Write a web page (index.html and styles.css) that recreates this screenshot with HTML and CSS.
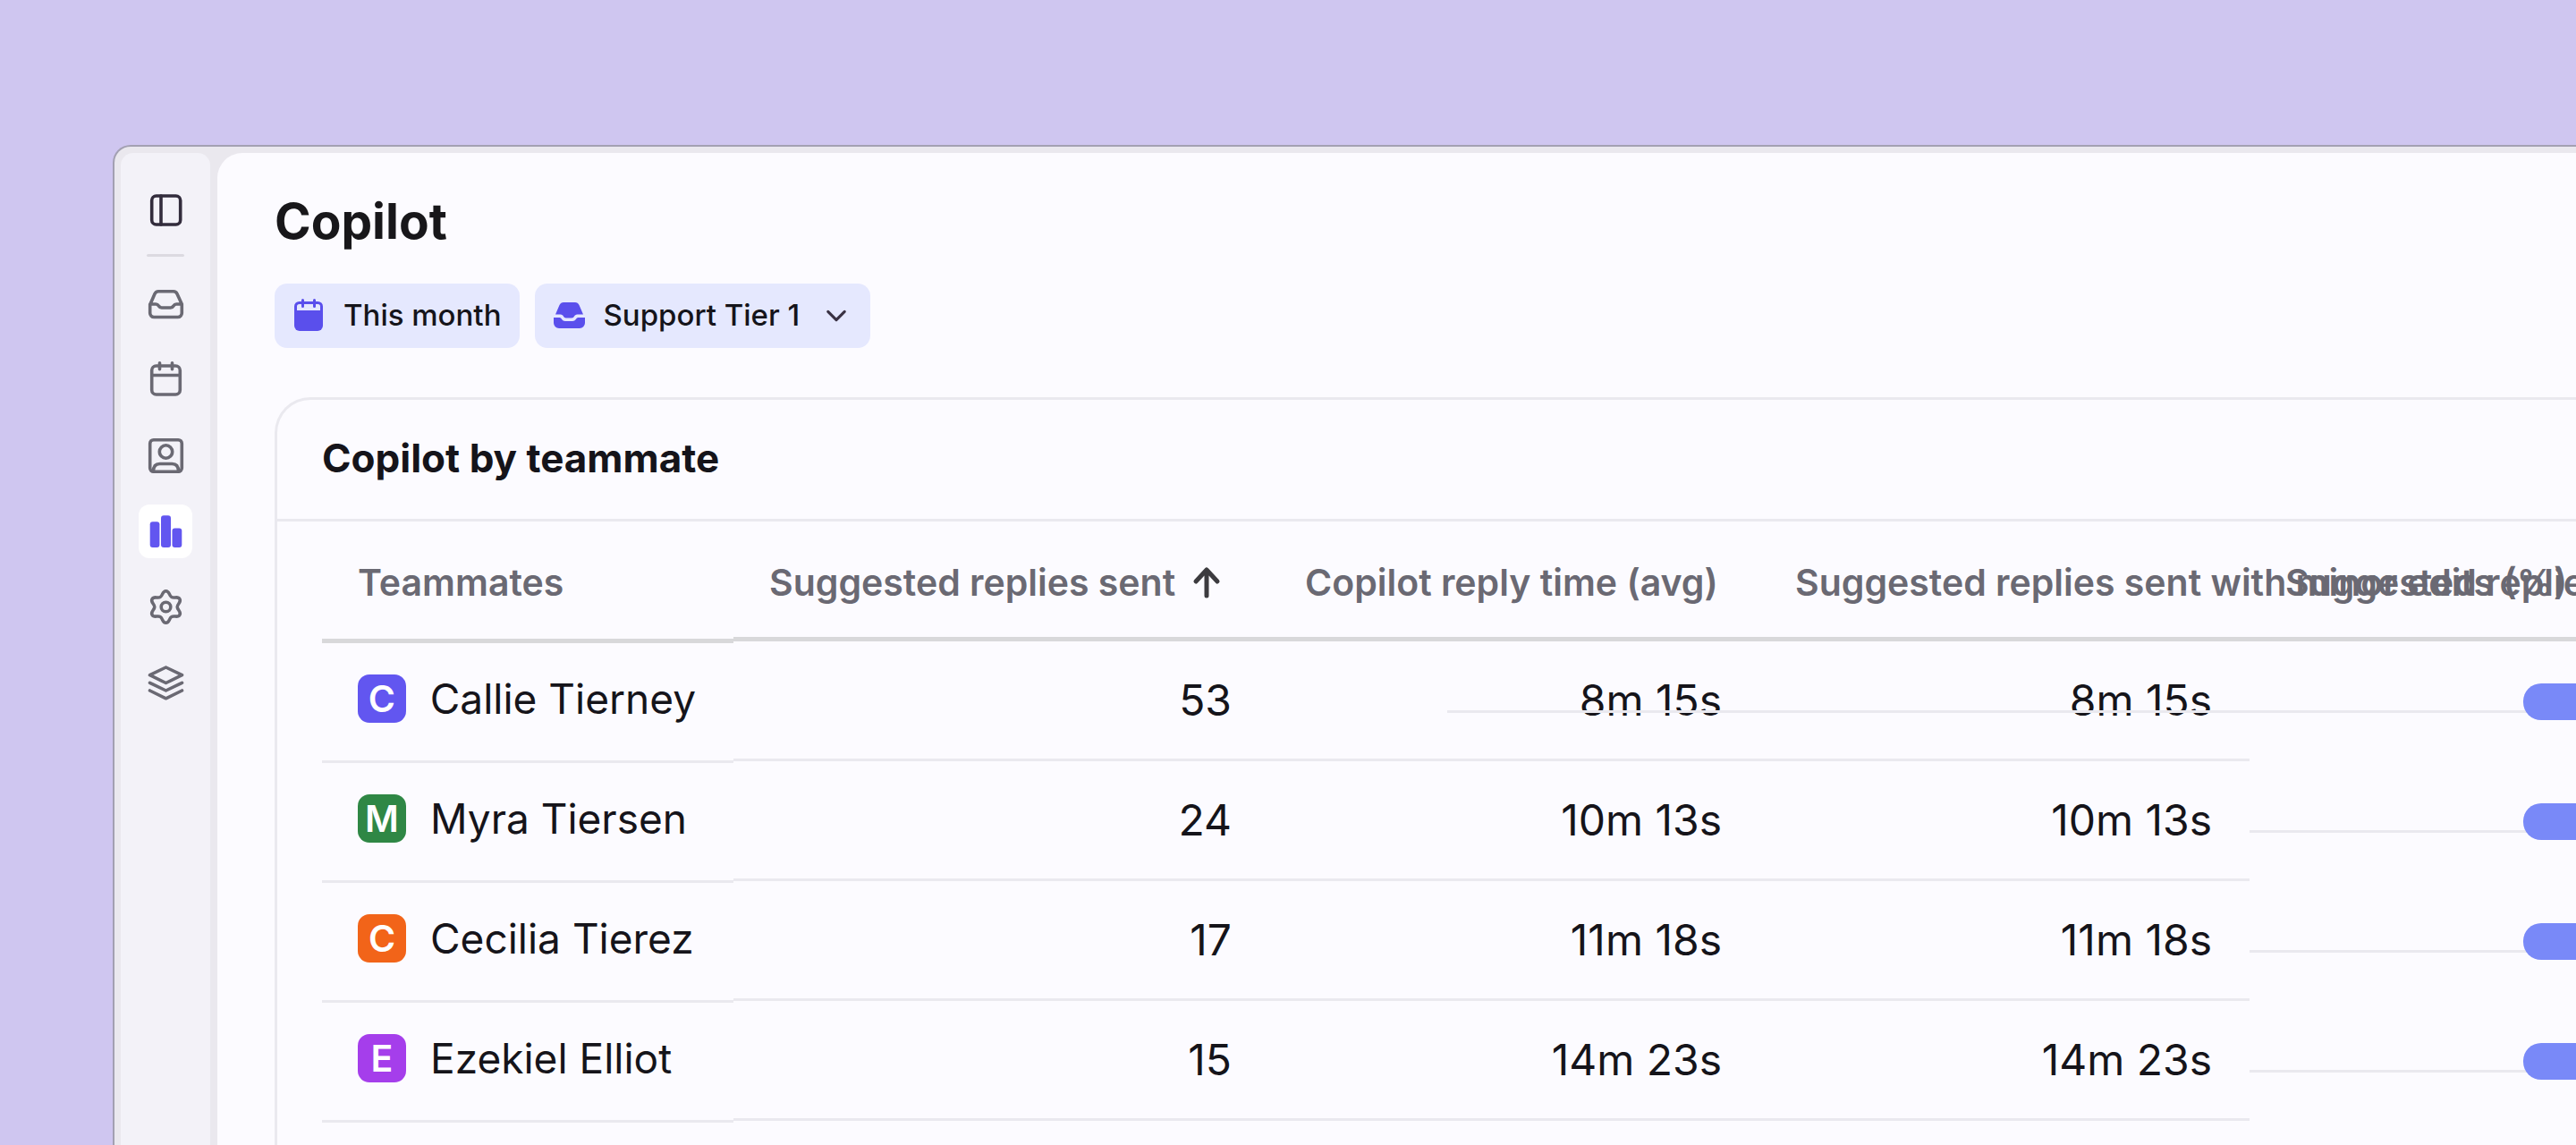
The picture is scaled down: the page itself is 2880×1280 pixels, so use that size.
FILE: index.html
```html
<!DOCTYPE html>
<html lang="en">
<head>
  <meta charset="UTF-8">
  <meta name="viewport" content="width=device-width, initial-scale=1.0">
  <title>Copilot</title>
  <link rel="stylesheet" href="styles.css">
</head>
<body>

  <div class="window">
    <nav class="sidebar">
      <button class="nav-item dark" type="button" aria-label="Toggle sidebar">
        <svg viewBox="0 0 60 60"><rect x="14.700" y="14" width="32" height="32" rx="5"/><path d="M25 14v32"/></svg>
      </button>
      <hr>
      <div class="nav-links">
        <a class="nav-item" href="#inbox" aria-label="Inbox">
          <svg viewBox="-1 0 60 60"><path d="M12 31l5-11.500q1.200-2.700 4-2.700h17q2.800 0 4 2.700L47.300 31v10a4.500 4.500 0 0 1-4.500 4.500H16.200a4.500 4.500 0 0 1-4.500-4.500V31h6.500c4 0 2.500 4 6.500 4h10c4 0 2.500-4 6.500-4h6"/></svg>
        </a>
        <a class="nav-item" href="#calendar" aria-label="Calendar">
          <svg viewBox="-1 0 60 60"><rect x="13.700" y="15" width="31.600" height="32" rx="5"/><path d="M13.700 25.500h31.600M22.500 11.700v7M36.500 11.700v7"/></svg>
        </a>
        <a class="nav-item" href="#contacts" aria-label="Contacts">
          <svg viewBox="-1 0 60 60"><rect x="11.700" y="12.700" width="35.600" height="35.600" rx="4"/><circle cx="29.500" cy="26" r="7.200"/><path d="M15.500 48c0-5.500 2.500-8.500 7-8.500h14c4.500 0 7 3 7 8.500"/></svg>
        </a>
        <a class="nav-item active" href="#reports" aria-label="Reports">
          <svg viewBox="-1 0 60 60"><rect x="11.700" y="19.300" width="10.700" height="28.700" rx="3"/><rect x="24" y="12.300" width="11" height="35.700" rx="3"/><rect x="36.500" y="26.500" width="10.800" height="21.500" rx="3"/></svg>
        </a>
        <a class="nav-item" href="#settings" aria-label="Settings">
          <svg viewBox="-1 0 60 60"><path d="M29.500 11.700C33.700 11.700 32.800 16.750 35.850 18.500C38.900 20.250 42.800 16.960 44.900 20.600C47 24.240 42.200 26 42.200 29.500C42.200 33 47 34.760 44.900 38.400C42.800 42.040 38.900 38.750 35.850 40.500C32.800 42.250 33.700 47.300 29.500 47.300C25.300 47.300 26.200 42.250 23.150 40.500C20.100 38.750 16.200 42.040 14.100 38.400C12 34.760 16.800 33 16.800 29.500C16.800 26 12 24.240 14.100 20.600C16.200 16.960 20.100 20.250 23.150 18.500C26.200 16.750 25.300 11.700 29.500 11.700Z"/><circle cx="29.500" cy="29.500" r="5.300"/></svg>
        </a>
        <a class="nav-item" href="#knowledge" aria-label="Knowledge">
          <svg viewBox="-1 0 60 60"><path d="M29.500 12L47.500 20.700 29.500 29.500 11.500 20.700ZM11.500 29.300l18 8.700L47.500 29.300M11.500 38l18 8.800L47.500 38"/></svg>
        </a>
      </div>
    </nav>

    <main class="main">
      <h1>Copilot</h1>
      <div class="filters">
        <button class="chip" type="button">
          <svg class="chip-icon" viewBox="0 0 38 38"><path d="M4.500 14V9.500a4 4 0 0 1 4-4h21a4 4 0 0 1 4 4V14M12.500 2.500v7M25.500 2.500v7" fill="none" stroke="currentColor" stroke-width="3" stroke-linecap="round"/><path d="M3 14h32v17a6 6 0 0 1-6 6H9a6 6 0 0 1-6-6z" fill="currentColor"/></svg>
          This month
        </button>
        <button class="chip" type="button">
          <svg class="chip-icon" viewBox="0 0 38 38"><path d="M4 18.500L8.500 8q1.500-3 4.500-3h13q3 0 4.500 3L35 18.500h-6.500c-4 0-3 4-6.500 4h-6c-3.500 0-2.500-4-6.500-4zM2 22h6.500c3 .5 2.500 4 6.500 4h8c4 0 3.500-3.500 6.500-4H37v6a6 6 0 0 1-6 6H8a6 6 0 0 1-6-6z" fill="currentColor"/></svg>
          Support Tier 1
          <svg class="chevron" viewBox="0 0 26 26"><path d="M3 8l10 10 10-10"/></svg>
        </button>
      </div>

      <section class="card">
        <header class="card-header">
          <h2>Copilot by teammate</h2>
        </header>
        <table>
          <colgroup>
            <col class="col-name">
            <col class="col-sent">
            <col class="col-metric">
            <col class="col-metric">
            <col class="col-chart">
          </colgroup>
          <thead>
            <tr>
              <th scope="col">Teammates</th>
              <th scope="col" aria-sort="ascending">
                <button class="sort" type="button">Suggested replies sent
                  <svg viewBox="0 0 32 36"><path d="M16 33V5M4 17L16 4l12 13"/></svg>
                </button>
              </th>
              <th scope="col">Copilot reply time (avg)</th>
              <th scope="col">Suggested replies sent with minor edits (%)</th>
              <th scope="col">Suggested replies sent (%)</th>
            </tr>
          </thead>
          <tbody>
            <tr class="wide-track">
              <td><span class="teammate"><span class="avatar indigo">C</span>Callie Tierney</span></td>
              <td>53</td>
              <td>8m 15s</td>
              <td>8m 15s</td>
              <td class="chart"><div class="bar"></div></td>
            </tr>
            <tr>
              <td><span class="teammate"><span class="avatar green">M</span>Myra Tiersen</span></td>
              <td>24</td>
              <td>10m 13s</td>
              <td>10m 13s</td>
              <td class="chart"><div class="bar"></div></td>
            </tr>
            <tr>
              <td><span class="teammate"><span class="avatar orange">C</span>Cecilia Tierez</span></td>
              <td>17</td>
              <td>11m 18s</td>
              <td>11m 18s</td>
              <td class="chart"><div class="bar"></div></td>
            </tr>
            <tr>
              <td><span class="teammate"><span class="avatar purple">E</span>Ezekiel Elliot</span></td>
              <td>15</td>
              <td>14m 23s</td>
              <td>14m 23s</td>
              <td class="chart"><div class="bar"></div></td>
            </tr>
          </tbody>
        </table>
      </section>
    </main>
  </div>

</body>
</html>
```

FILE: styles.css
```css
* { margin: 0; padding: 0; box-sizing: border-box; }
body {
  font-family: Inter, 'Liberation Sans', sans-serif;
  background-color: #CFC6F0;
  color: #15141A;
  height: 100vh;
  padding: 162px 0 0 126px;
  overflow: hidden;
  display: flex;
}
button {
  font: inherit;
  color: inherit;
  background: none;
  border: none;
  cursor: pointer;
}
a {
  text-decoration: none;
}

/* window frame, runs off the right and bottom edges */
.window {
  flex: 1 0 100%;
  display: flex;
  gap: 8px;
  padding: 7px 7px 0;
  background: #EAE8EE;
  border: 2px solid #A3A0B2;
  border-bottom: none;
  border-radius: 20px 20px 0 0;
}

.sidebar {
  flex: none;
  width: 100px;
  padding-top: 34px;
  display: flex;
  flex-direction: column;
  align-items: center;
  background: #F3F2F8;
  border-radius: 14px 14px 0 0;
}
.sidebar hr {
  width: 42px;
  height: 3px;
  margin: 19px 0 22px;
  border: none;
  border-radius: 2px;
  background: #DCDAE1;
}
.nav-links {
  display: flex;
  flex-direction: column;
  gap: 25px;
}
.nav-item {
  display: block;
  width: 60px;
  height: 60px;
  border-radius: 12px;
  color: #6A6973;
}
.nav-item svg {
  display: block;
  width: 60px;
  height: 60px;
  fill: none;
  stroke: currentColor;
  stroke-width: 3.6;
  stroke-linecap: round;
  stroke-linejoin: round;
}
.nav-item.dark {
  color: #322C3C;
}
.nav-item.active {
  background: #FFFFFF;
  color: #6256F0;
}
.nav-item.active svg {
  fill: currentColor;
  stroke: none;
}

.main {
  flex: 1;
  min-width: 0;
  padding: 44px 0 0 64px;
  background: #FCFBFF;
  border-radius: 28px 0 0 0;
}
h1 {
  font-size: 55px;
  line-height: 64px;
  font-weight: 700;
  color: #18171A;
}
.filters {
  display: flex;
  gap: 17px;
  margin: 38px 0 55px;
}
.chip {
  display: flex;
  align-items: center;
  height: 72px;
  padding: 0 20px 2px 19px;
  font-size: 33px;
  font-weight: 500;
  background: #E5E8FE;
  border-radius: 14px;
}
.chip-icon {
  width: 38px;
  height: 38px;
  margin-right: 20px;
  color: #5A4FEC;
}
.chevron {
  width: 24px;
  height: 24px;
  margin: 2px 6px 0 29px;
  fill: none;
  stroke: #3A3244;
  stroke-width: 3.4;
  stroke-linecap: round;
  stroke-linejoin: round;
}

.card {
  height: 900px;
  border: 3px solid #EAE9EF;
  border-right: none;
  border-radius: 40px 0 0 0;
}
.card-header {
  height: 136px;
  padding: 0 0 4px 50px;
  display: flex;
  align-items: center;
  border-bottom: 3px solid #EAE9EF;
}
h2 {
  font-size: 44px;
  font-weight: 700;
}

table {
  width: 2700px;
  margin-left: 50px;
  table-layout: fixed;
  border-collapse: collapse;
}
.col-name { width: 460px; }
.col-sent { width: 599px; }
.col-metric { width: 548px; }
th, td {
  position: relative;
  height: 134px;
  padding: 0 42px 0 40px;
  white-space: nowrap;
}
th {
  padding-top: 2px;
  font-size: 41px;
  font-weight: 600;
  text-align: left;
  color: #6A6973;
}
td {
  padding-bottom: 4px;
  font-size: 48px;
  text-align: right;
}
td:first-child {
  padding-bottom: 6px;
  font-size: 46px;
  text-align: left;
}
th::after, td::after {
  content: "";
  position: absolute;
  left: 0;
  right: 0;
  bottom: 0;
  height: 3px;
  background: #EAE9EF;
}
th::after {
  height: 5px;
  background: #D8D8DA;
}
th:first-child::after, td:first-child::after {
  bottom: -2px;
}
.sort {
  display: flex;
  align-items: center;
  gap: 19px;
}
.sort svg {
  width: 32px;
  height: 36px;
  fill: none;
  stroke: #3C3B3F;
  stroke-width: 5;
  stroke-linecap: round;
  stroke-linejoin: round;
}

.teammate {
  display: flex;
  align-items: center;
}
.avatar {
  width: 54px;
  height: 54px;
  margin-right: 27px;
  border-radius: 13px;
  font-size: 41px;
  line-height: 54px;
  font-weight: 600;
  text-align: center;
  color: #FFFFFF;
}
.indigo { background: #6256F0; }
.green { background: #2F8745; }
.orange { background: #F26419; }
.purple { background: #A53EEB; }

/* chart cells: the guide line sits behind the bar */
.chart {
  padding: 0;
}
.chart::after {
  bottom: 54px;
}
.wide-track .chart::after {
  left: -897px;
}
.bar {
  position: relative;
  z-index: 1;
  height: 41px;
  margin-left: 306px;
  border-radius: 20px 0 0 20px;
  background: #7989F8;
}
```
